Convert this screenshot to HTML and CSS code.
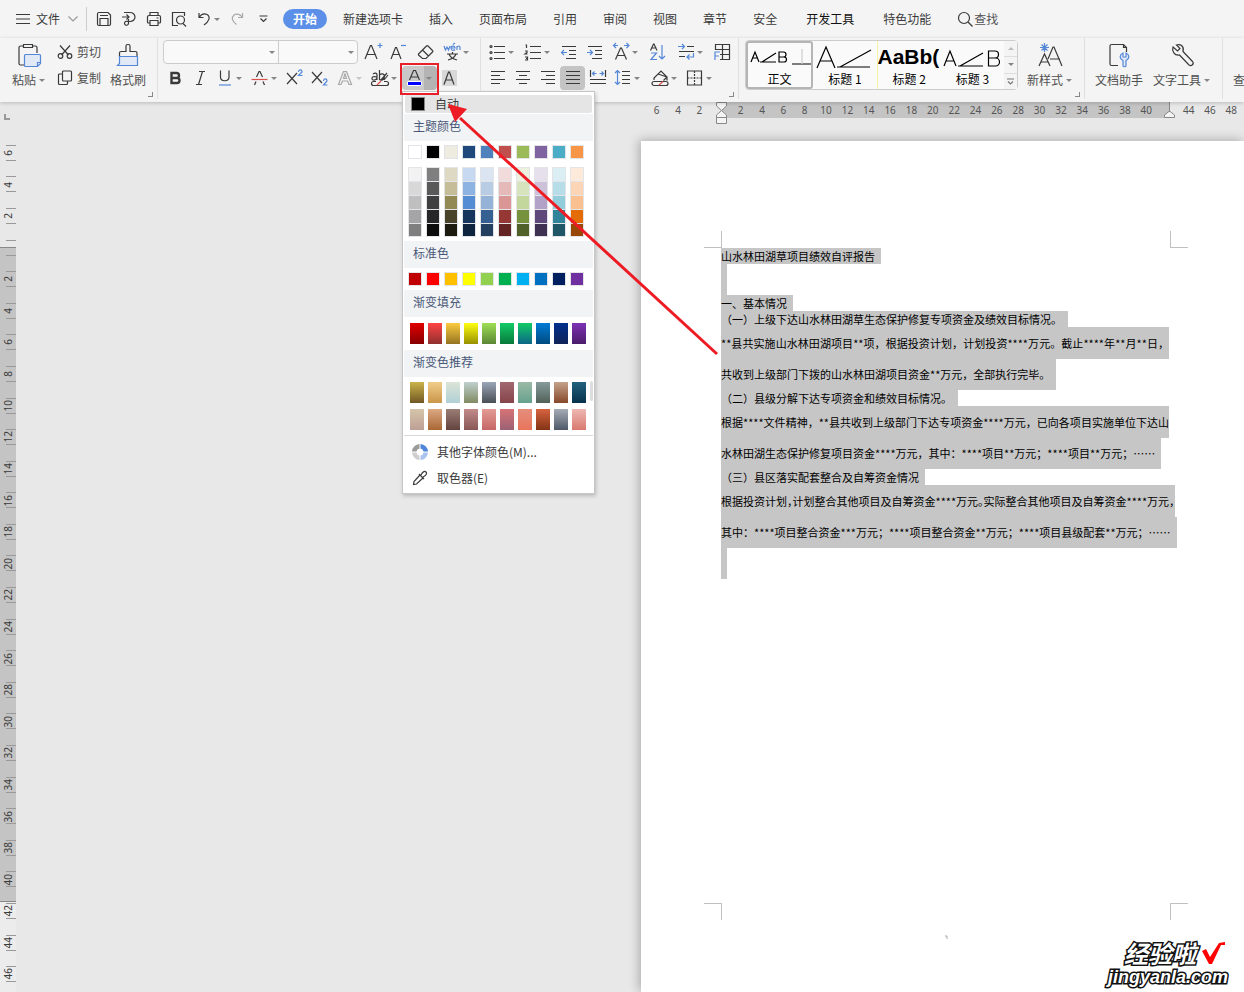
FILE: index.html
```html
<!DOCTYPE html>
<html lang="zh-CN">
<head>
<meta charset="utf-8">
<title>文字处理</title>
<link rel="stylesheet" href="styles.css">
</head>
<body>
<header class="menubar">
  <button class="file"><svg width="14" height="14" viewBox="0 0 14 14"><path d="M0 2.500h14M0 7h14M0 11.500h14"/></svg><span>文件</span><svg class="dim" width="10" height="8" viewBox="0 0 10 8"><path d="M.5 1.500 5 6l4.500-4.500"/></svg></button>
  <div class="quick">
    <button aria-label="保存"><svg width="16" height="16" viewBox="0 0 16 16"><path d="M1.500 3a1.500 1.500 0 0 1 1.500-1.500h9l2.500 2.500v9a1.500 1.500 0 0 1-1.500 1.500H3A1.500 1.500 0 0 1 1.500 13zM4 4.500h8M4 14V7.500h8V14"/></svg></button>
    <button aria-label="输出"><svg width="16" height="16" viewBox="0 0 16 16"><path d="M3 1.500h6a5 4.500 0 0 1 0 9H7.500M1 6h7M5.500 3.500 8 6l-2.500 2.500M7.500 8v4.500a2 2 0 1 1-3-2c1-.6 2 0 3 0"/></svg></button>
    <button aria-label="打印"><svg width="16" height="16" viewBox="0 0 16 16"><path d="M4 4.500v-3h8v3M4 12H2.500A1 1 0 0 1 1.500 11V6a1.500 1.500 0 0 1 1.500-1.500h10A1.500 1.500 0 0 1 14.500 6v5a1 1 0 0 1-1 1H12M4 9.500h8v5H4zM10.500 7h2"/></svg></button>
    <button aria-label="打印预览"><svg width="16" height="16" viewBox="0 0 16 16"><path d="M7 14.500H1.500v-13h12V5M12 12.500l3 3"/><circle cx="9.500" cy="9" r="4"/></svg></button>
    <button class="undo" aria-label="撤销"><svg width="16" height="16" viewBox="0 0 16 16"><path d="M3 2v4.500h4.500M3 6.500C5 3.500 8 2 11 3.500c4 2.500 2 7-3 10.500"/></svg><i class="caret"></i></button>
    <button class="faded" aria-label="恢复"><svg width="16" height="16" viewBox="0 0 16 16"><path d="M13.500 2v4.500H9M13.500 6.500C11.500 3.500 8 2 5 4c-3 2.500-2 6 2.500 9.500"/></svg></button>
    <button class="more" aria-label="更多"><svg width="9" height="8" viewBox="0 0 9 8"><path d="M.5 1h8M1.500 3.500l3 3 3-3"/></svg></button>
  </div>
  <nav class="tabs">
    <button class="active">开始</button><button>新建选项卡</button><button>插入</button><button>页面布局</button><button>引用</button><button>审阅</button><button>视图</button><button>章节</button><button>安全</button><button class="strong">开发工具</button><button>特色功能</button>
  </nav>
  <button class="search"><svg width="17" height="17" viewBox="0 0 17 17"><circle cx="7" cy="7" r="5.500"/><path d="m11 11 4.500 4.500"/></svg><span>查找</span></button>
</header>

<div class="ribbon">
  <section class="group clipboard">
    <button class="big"><svg width="26" height="26" viewBox="0 0 26 26"><path d="M7 4H4.500A1.500 1.500 0 0 0 3 5.500v16A1.500 1.500 0 0 0 4.500 23H8M17 4h2.500A1.500 1.500 0 0 1 21 5.500V11M7.500 2.500h9v3h-9z"/><path class="bluefill" d="M8.500 13.500a1 1 0 0 1 1-1h14a1 1 0 0 1 1 1v8l-3 3h-12a1 1 0 0 1-1-1zM24.500 20.500h-3v4"/></svg><span>粘贴<i class="caret"></i></span></button>
    <div class="stack">
      <button><svg width="16" height="16" viewBox="0 0 16 16"><path d="M3 1.500 11.500 11M13 1.500 4.500 11"/><circle cx="3.500" cy="12" r="2.300"/><circle cx="12.500" cy="12" r="2.300"/></svg><span>剪切</span></button>
      <button><svg width="16" height="16" viewBox="0 0 16 16"><path d="M5.500 2a1 1 0 0 1 1-1h7a1 1 0 0 1 1 1v8a1 1 0 0 1-1 1h-7a1 1 0 0 1-1-1zM5.500 4H2.500a1 1 0 0 0-1 1v8.500a1 1 0 0 0 1 1h7a1 1 0 0 0 1-1V11"/></svg><span>复制</span></button>
    </div>
    <button class="big"><svg width="26" height="26" viewBox="0 0 26 26"><path d="M4.500 14.500V11a1.500 1.500 0 0 1 1.500-1.500h5V4a1.500 1.500 0 0 1 1.500-1.500h1A1.500 1.500 0 0 1 15 4v5.500h5.500A1.500 1.500 0 0 1 22 11v3.500"/><path class="bluefill" d="M4.500 14.500H22.500v9H2.500l2-2z"/></svg><span>格式刷</span></button>
    <i class="launcher"></i>
  </section>

  <section class="group font">
    <div class="row">
      <div class="combo"><label><input aria-label="字体"><i class="caret"></i></label><label><input aria-label="字号"><i class="caret"></i></label></div>
      <button class="tool" aria-label="增大字号"><svg width="20" height="20" viewBox="0 0 20 20"><path d="M2 17 7.500 3.500h1L14 17M4 12.500h8"/><path class="blue" d="M14.500 3.500h5M17 1v5"/></svg></button>
      <button class="tool" aria-label="减小字号"><svg width="20" height="20" viewBox="0 0 20 20"><path d="M3 17 7.500 5.500h1L13 17M4.500 12.500h7"/><path class="blue" d="M13 3.500h5"/></svg></button>
      <button class="tool wide" aria-label="清除格式"><svg width="20" height="20" viewBox="0 0 20 20"><path d="M3.500 12 11.500 4a1 1 0 0 1 1.500 0l4.500 4.500a1 1 0 0 1 0 1.500L11 16.500H7.500L3.500 13a1 1 0 0 1 0-1zM7.500 8l6 6"/></svg></button>
      <button class="tool drop wide" aria-label="拼音指南"><svg width="20" height="20" viewBox="0 0 20 20"><path class="blue" d="M2 4l1.500 4L5 5l1.500 3L8 4M9 6h4c0-2.500-4-2.500-4 0 0 3 3 2.500 4 1.500M11 2.500l2-1.500M15 8V4M15 5.500c1-2 3-2 3 0V8"/><path d="M5 12h11M10.500 10v2M7 12c1 3 4 5 8 6M14 12c-1 3-4 5-8 6"/></svg><i class="caret"></i></button>
    </div>
    <div class="row second">
      <button class="tool" aria-label="加粗"><svg width="20" height="20" viewBox="0 0 20 20"><path class="heavy" d="M6.500 5h5a2.300 2.300 0 0 1 0 5h-5zM6.500 10H12a2.500 2.500 0 0 1 0 5H6.500z"/></svg></button>
      <button class="tool" aria-label="倾斜"><svg width="20" height="20" viewBox="0 0 20 20"><path d="M9 3.500h6M6 16.500h6M12.500 3.500l-4 13"/></svg></button>
      <button class="tool drop" aria-label="下划线"><svg width="20" height="20" viewBox="0 0 20 20"><path d="M5.500 2.500V9c0 5 8.500 5 8.500 0V2.500"/><path class="blue" d="M4 17h12"/></svg><i class="caret"></i></button>
      <button class="tool drop" aria-label="删除线"><svg width="20" height="20" viewBox="0 0 20 20"><path d="M4.500 17 6 13.500M14.500 17 13 13.500M6.500 9 9 3.500h1L12.500 9"/><path class="red" d="M1.500 11.500h16"/></svg><i class="caret"></i></button>
      <button class="tool" aria-label="上标"><svg width="20" height="20" viewBox="0 0 20 20"><path d="m2 5 10 11M12 5 2 16"/><path class="blue" d="M13.500 4c0-3 4-2.500 3.500 0L13.500 7.500h4"/></svg></button>
      <button class="tool" aria-label="下标"><svg width="20" height="20" viewBox="0 0 20 20"><path d="m2 4 10 11M12 4 2 15"/><path class="blue" d="M13.500 13c0-3 4-2.500 3.500 0l-3.500 4h4"/></svg></button>
      <button class="tool drop faded" aria-label="文字效果"><svg width="20" height="20" viewBox="0 0 20 20"><path d="M3.500 16.500 8.500 3.500h3l5 13H14L12.500 13h-5L6 16.500zM8.500 10.500h3L10 6z"/></svg><i class="caret"></i></button>
      <button class="tool drop" aria-label="突出显示"><svg width="20" height="20" viewBox="0 0 20 20"><path d="M3 6c2-1.500 4-1 4 1v5M7 9c-4-1-5 0-5 1.500C2 13 6 12.500 7 10M9.500 2v10M9.500 7c2-2 5-1.500 5 1.500s-3 4.500-5 3M17 5l-6 7M18 7l-4 5M6 13.500H3.500a2 2 0 0 0 0 4h13a2 2 0 0 0 0-4H14"/><path class="red" d="m7 17 4-4"/></svg><i class="caret"></i></button>
      <div class="colorpick">
        <button class="tool drop pressed" aria-label="字体颜色" aria-expanded="true"><svg width="20" height="20" viewBox="0 0 20 20"><path d="m4.500 12 4-9.500h2l4 9.500M6 9h7"/><rect class="plate" x="2" y="13" width="15" height="5" rx="2"/><path class="inkline" d="M3 15.500h13"/></svg><i class="caret"></i></button>
        <div class="menu">
          <button class="auto"><i class="black"></i>自动</button>
          <h3>主题颜色</h3>
          <div class="swatches" id="theme"></div>
          <div class="swatches shades" id="shades"></div>
          <h3>标准色</h3>
          <div class="swatches" id="standard"></div>
          <h3>渐变填充</h3>
          <div class="swatches fades" id="fills"></div>
          <h3>渐变色推荐</h3>
          <div class="swatches fades suggested" id="suggested"></div>
          <button class="entry"><svg width="16" height="16" viewBox="0 0 16 16"><path fill="#4f86d9" stroke="none" d="M8.500 0A8 8 0 0 1 16 7.500h-4.500A3.500 3.500 0 0 0 8.500 4.500z"/><path fill="#a9c4ee" stroke="none" d="M16 8.500A8 8 0 0 1 8.500 16v-4.500a3.500 3.500 0 0 0 3-3z"/><path fill="#cfcfcf" stroke="none" d="M7.500 16A8 8 0 0 1 0 8.500h4.500a3.500 3.500 0 0 0 3 3z"/><path fill="#9b9b9b" stroke="none" d="M0 7.500A8 8 0 0 1 7.500 0v4.500a3.500 3.500 0 0 0-3 3z"/></svg>其他字体颜色(M)...</button>
          <button class="entry"><svg width="16" height="16" viewBox="0 0 16 16"><path d="m8 5-6 6.500-.5 3 3-.5L11 8M7 4l5 5M9 5c2-4 4-4 5-3s1 3-3 5"/></svg>取色器(E)</button>
        </div>
        <i class="frame"></i>
      </div>
      <button class="tool" aria-label="字符底纹"><svg width="20" height="20" viewBox="0 0 20 20"><rect class="shade" x="2" y="2" width="15" height="16"/><path d="M4 16.500 8.500 4h1l4.500 12.500M5.500 12h7"/></svg></button>
    </div>
  </section>

  <section class="group para">
    <div class="row">
      <button class="tool drop" aria-label="项目符号"><svg width="20" height="20" viewBox="0 0 20 20"><path d="M7 4.500h11M7 10.500h11M7 16.500h11"/><circle cx="4" cy="4.500" r="1"/><circle cx="4" cy="10.500" r="1"/><circle cx="4" cy="16.500" r="1"/></svg><i class="caret"></i></button>
      <button class="tool drop" aria-label="编号"><svg width="20" height="20" viewBox="0 0 20 20"><path d="M7 4.500h11M7 10.500h11M7 16.500h11M2.500 3h1v3M2 9h2v1.500L2 12h2.500M2 15h2.500v3H2M3 16.500h1"/></svg><i class="caret"></i></button>
      <button class="tool" aria-label="减少缩进"><svg width="20" height="20" viewBox="0 0 20 20"><path d="M3 4.500h14M10 8.500h7M10 12.500h7M7 16.500h10"/><path class="blue" d="M8 10.500H2.500M5 8l-2.500 2.500L5 13"/></svg></button>
      <button class="tool" aria-label="增加缩进"><svg width="20" height="20" viewBox="0 0 20 20"><path d="M3 4.500h14M10 8.500h7M10 12.500h7M7 16.500h10"/><path class="blue" d="M2 10.500h5.500M5 8l2.500 2.500L5 13"/></svg></button>
      <button class="tool drop" aria-label="字符缩放"><svg width="20" height="20" viewBox="0 0 20 20"><path d="M4.500 17.500 9.500 6h1l5 11.500M6.500 13.500h7"/><path class="blue" d="M7 3.500H2.500M5 1 2.500 3.500 5 6M13 3.500h5M15.500 1 18 3.500 15.500 6"/></svg><i class="caret"></i></button>
      <button class="tool" aria-label="排序"><svg width="20" height="20" viewBox="0 0 20 20"><path d="M3.500 8.500 6.500 2h.5l3 6.500M4.500 6h5"/><path class="blue" d="M4 11h5.500L4 17.500h6M15 3v14M12 14l3 3 3-3"/></svg></button>
      <button class="tool drop gap" aria-label="显示标记"><svg width="20" height="20" viewBox="0 0 20 20"><path d="M11 4.500h7M3 9.500h15M3 14.500h6"/><path class="blue" d="M2 4.500h6M6 2l2.500 2.500L6 7M17.500 11v4H11M13.500 12.500 11 15l2.500 2.500"/></svg><i class="caret"></i></button>
      <button class="tool" aria-label="制表位"><svg width="20" height="20" viewBox="0 0 20 20"><path d="M3.500 8V2.500h14v15H8M10.500 2.500v15M3.500 7.500h14M8 12.500h9.500"/><path class="blue" d="M3 18v-8h5M3 14h4"/></svg></button>
    </div>
    <div class="row second">
      <button class="tool" aria-label="左对齐"><svg width="20" height="20" viewBox="0 0 20 20"><path d="M3 3.500h14M3 7.500h9M3 11.500h14M3 15.500h9"/></svg></button>
      <button class="tool" aria-label="居中"><svg width="20" height="20" viewBox="0 0 20 20"><path d="M3 3.500h14M6 7.500h8M3 11.500h14M6 15.500h8"/></svg></button>
      <button class="tool" aria-label="右对齐"><svg width="20" height="20" viewBox="0 0 20 20"><path d="M3 3.500h14M8 7.500h9M3 11.500h14M8 15.500h9"/></svg></button>
      <button class="tool pressed" aria-label="两端对齐"><svg width="20" height="20" viewBox="0 0 20 20"><path d="M3 3.500h14M3 7.500h14M3 11.500h14M3 15.500h14"/></svg></button>
      <button class="tool" aria-label="分散对齐"><svg width="20" height="20" viewBox="0 0 20 20"><path d="M2.500 2v7M17.500 2v7M2 11.500h16M2 15.500h16"/><path class="blue" d="M4.500 5.500h4M6.500 3.500l-2 2 2 2M15.500 5.500h-4M13.500 3.500l2 2-2 2"/></svg></button>
      <button class="tool drop" aria-label="行距"><svg width="20" height="20" viewBox="0 0 20 20"><path d="M9 3.500h8M9 7.500h8M9 11.500h8M9 15.500h8"/><path class="blue" d="M4.500 2.500v14M2 5l2.500-2.500L7 5M2 14l2.500 2.500L7 14"/></svg><i class="caret"></i></button>
      <button class="tool drop second-gap" aria-label="底纹颜色"><svg width="20" height="20" viewBox="0 0 20 20"><path d="M4 12v-2l7-7 6 6-3.500 3.500M8 6l9 3M17 9v3.500M4 13.500h12a2 2 0 0 1 0 4H4a2 2 0 0 1 0-4z"/><path class="red" d="m9 17 4-3.500"/></svg><i class="caret"></i></button>
      <button class="tool drop" aria-label="边框"><svg width="20" height="20" viewBox="0 0 20 20"><path d="M2.500 3h14v14h-14z"/><path stroke-dasharray="2 1" d="M9.500 3v14M2.500 10h14"/></svg><i class="caret"></i></button>
    </div>
    <i class="launcher"></i>
  </section>

  <section class="group styles">
    <div class="gallery">
      <button class="style chosen"><svg width="60" height="26" viewBox="0 0 60 26"><path d="m1 19 4-10 4 10M2 15h6M10 19h16M12 19 26 10M29 9h4.500a2 2 0 0 1 0 5H29zM29 14h5a2 2 0 0 1 0 5h-5zM42 21h20"/><path class="dim" d="M52 6v15"/></svg>正文</button>
      <button class="style"><svg width="58" height="28" viewBox="0 0 58 28"><path d="m1 27 9-21 9 21M4 20h12M21 26h33M24 26 55 9"/></svg>标题 1</button>
      <button class="style edge"><b>AaBb(</b>标题 2</button>
      <button class="style"><svg width="58" height="28" viewBox="0 0 58 28"><path d="m1 25 6-15 6 15M3 20h8M15 25h25M17 25 40 12M45.500 10h6.500a3 3 0 0 1 0 7h-6.500zM45.500 17h7a3 3 0 0 1 0 8h-7z"/></svg>标题 3</button>
      <div class="scroller"><button class="off" aria-label="上"><i class="caret up"></i></button><button aria-label="下"><i class="caret"></i></button><button aria-label="展开"><svg width="7" height="7" viewBox="0 0 7 7"><path d="M0 1h7M1 3.500 3.500 6 6 3.500"/></svg></button></div>
    </div>
    <button class="big newstyle"><svg width="26" height="26" viewBox="0 0 26 26"><path d="m2 24 5.500-12 5.500 12M4 20h7M11 17l5-12h1L25 24M13 17h10"/><path class="blue" d="M7.500 1v9M3 5.500h9M4.500 2.500l6 6M10.500 2.500l-6 6"/></svg><span>新样式<i class="caret"></i></span></button>
    <i class="launcher"></i>
  </section>

  <section class="group tools">
    <button class="big"><svg width="26" height="26" viewBox="0 0 26 26"><path d="M12 23.500H5.500a1.500 1.500 0 0 1-1.500-1.500V4A1.500 1.500 0 0 1 5.500 2.500h12L20.500 5.500V10M17.500 2.500v3h3"/><path class="bluefill" d="M17 24v-5.500c-4-2-3.500-6 0-7.500V15h3v-4c3.500 1.500 4 5.500 0 7.500V24c-.5 1-2.500 1-3 0z"/></svg><span>文档助手</span></button>
    <button class="big"><svg width="26" height="26" viewBox="0 0 26 26"><path d="M4 5 8.500 9 11 6.500 7.500 3c4-1.500 8 1.500 6.500 6.500L23.500 19.500c2 2.500-1 5-3.500 3.500L10.500 13C5.500 14 2.500 9 4 5z"/></svg><span>文字工具<i class="caret"></i></span></button>
  </section>
  <section class="group find"><button class="big"><svg width="26" height="26" viewBox="0 0 26 26"></svg><span>查找替换</span></button></section>
</div>

<main class="workspace">
  <div class="vruler"><i class="corner"></i><div class="vcells" id="vruler"></div></div>
  <div class="canvas">
    <div class="hruler">
      <div class="outer" id="before"></div>
      <div class="inner"><svg class="indent" width="11" height="24" viewBox="0 0 11 24"><path d="M.5.5h10V4l-5 4.500-5-4.500zM.5 15.500V13l5-4.500 5 4.500v2.500zM.5 15.500h10v6H.5z"/></svg><div class="nums" id="inside"></div><svg class="indent" width="11" height="24" viewBox="0 0 11 24"><path d="M5.500 0v10M.5 15.500V13l5-4 5 4v2.500z"/></svg></div>
      <div class="outer after" id="after"></div>
    </div>
    <article class="page">
      <div class="marks"><i class="tl"></i><i class="tr"></i></div>
      <div class="text">
        <p><mark>山水林田湖草项目绩效自评报告</mark></p>
        <p class="blank"><mark></mark></p>
        <p><mark>一、基本情况</mark></p>
        <p><mark>（一）上级下达山水林田湖草生态保护修复专项资金及绩效目标情况。</mark></p>
        <p class="tall full"><mark>**县共实施山水林田湖项目**项，根据投资计划，计划投资****万元。截止****年**月**日，</mark></p>
        <p class="tall last"><mark>共收到上级部门下拨的山水林田湖项目资金**万元，全部执行完毕。</mark></p>
        <p><mark>（二）县级分解下达专项资金和绩效目标情况。</mark></p>
        <p class="tall full"><mark>根据****文件精神，**县共收到上级部门下达专项资金****万元，已向各项目实施单位下达山</mark></p>
        <p class="tall last"><mark>水林田湖生态保护修复项目资金****万元，其中：****项目**万元；****项目**万元；……</mark></p>
        <p><mark>（三）县区落实配套整合及自筹资金情况</mark></p>
        <p class="tall full tight"><mark>根据投资计划，计划整合其他项目及自筹资金****万元。实际整合其他项目及自筹资金****万元，</mark></p>
        <p class="tall last"><mark>其中：****项目整合资金***万元；****项目整合资金**万元；****项目县级配套**万元；……</mark></p>
        <p class="blank"><mark></mark></p>
      </div>
      <div class="marks"><i class="bl"></i><i class="br"></i></div>
      <svg class="speck" width="4" height="5" viewBox="0 0 4 5"><path d="M0 1h2v3"/></svg>
    </article>
  </div>
</main>

<svg class="pointer" width="290" height="270" viewBox="0 0 290 270"><path class="shaft" d="M277 254 20 18"/><path class="head" d="M8 4 27 9 15 22z"/></svg>
<div class="watermark"><div class="brand">经验啦<svg width="24" height="24" viewBox="0 0 24 24"><path d="m0 10 4-2 4 8L17 2l6-1v3h-4l-9 19H7z"/></svg></div><div class="site">jingyanla.com</div></div>
<script src="script.js"></script>
</body>
</html>
```
FILE: styles.css
```css
* { box-sizing: border-box; margin: 0; padding: 0; }
body { height: 100vh; overflow: hidden; display: flex; flex-direction: column; position: relative; background: #e8e8e8; color: #3a3a3a; font: 12px/16px "Noto Sans CJK SC", sans-serif; }
button { border: 0; background: none; color: inherit; font: inherit; white-space: nowrap; }
svg { display: block; flex: none; overflow: visible; fill: none; stroke: #3a3a3a; stroke-width: 1.2; }
.blue { stroke: #5487d8; }
.bluefill { stroke: #5487d8; fill: #e1e9f6; }
.red { stroke: #d9534f; }
.dim { stroke: #999; }
.caret { display: inline-block; flex: none; border: solid transparent; border-width: 3px 3px 0; border-top-color: #858585; }
.caret.up { border-width: 0 3px 3px; border-bottom-color: #bbb; }
.faded { opacity: .4; }

.menubar { flex: none; height: 38px; display: flex; align-items: center; padding-left: 16px; background: #f4f4f4; }
.file { display: flex; align-items: center; gap: 6px; padding-right: 8px; height: 24px; border-right: 1px solid #ccc; }
.file .dim { margin-left: 2px; }
.quick { display: flex; align-items: center; gap: 9px; padding-left: 9px; }
.quick button { display: flex; align-items: center; }
.undo { gap: 2px; }
.quick .more { padding-left: 5px; }
.tabs { display: flex; align-items: center; gap: 26px; margin-left: 15px; }
.tabs .active { width: 44px; height: 20px; margin-right: -10px; border-radius: 10px; background: #5b8fe8; color: #fff; font-weight: 700; }
.tabs .strong { margin: 0 3px; color: #111; }
.search { display: flex; align-items: center; margin-left: 26px; color: #555; }

.ribbon { flex: none; height: 64px; display: flex; position: relative; z-index: 2; background: #f4f4f4; box-shadow: 0 1px 4px #0003; }
.group { position: relative; flex: none; padding-top: 1px; }
.group::after { content: ""; position: absolute; right: 0; top: 0; height: 61px; border-right: 1px solid #e0e0e0; }
.launcher { position: absolute; right: 5px; bottom: 5px; width: 5px; height: 5px; border: solid #888; border-width: 0 1px 1px 0; }
.big { display: flex; flex-direction: column; align-items: center; gap: 4px; height: 50px; padding-top: 3px; color: #505050; }
.big span { display: flex; align-items: center; gap: 3px; }
.clipboard { display: flex; width: 158px; padding-left: 12px; }
.stack { display: flex; flex-direction: column; margin: 0 9px 0 12px; }
.stack button { display: flex; align-items: center; gap: 4px; height: 26px; color: #505050; }
.font { width: 323px; padding-left: 4px; }
.row { display: flex; align-items: center; height: 26px; }
.combo { display: flex; width: 195px; height: 24px; margin: 0 2px 0 1px; border: 1px solid #ccc; border-radius: 4px; background: #f9f9f9; }
.combo label { display: flex; align-items: center; flex: 1; padding-right: 3px; min-width: 0; }
.combo label:first-child { flex: 0 0 115px; border-right: 1px solid #ccc; }
.combo input { flex: 1; min-width: 0; height: 100%; border: 0; outline: 0; background: none; }
.tool { flex: none; display: flex; align-items: center; justify-content: center; width: 25px; height: 24px; border-radius: 4px; }
.drop { width: 35px; padding-left: 3px; justify-content: flex-start; gap: 1px; }
.wide { margin-left: 2px; }
.heavy { stroke-width: 2.400; }
.pressed { background: #c4c4c4; }
.colorpick { position: relative; }
.colorpick .pressed { background: linear-gradient(90deg, #c9c9c9 22px, #b4b4b4 22px); }
.plate { fill: #fff; stroke: none; }
.inkline { stroke: #00f; stroke-width: 3; }
.shade { fill: #d8d8d8; stroke: none; }
.frame { position: absolute; left: -2px; top: -3px; width: 39px; height: 32px; border: 2px solid #e8202a; pointer-events: none; z-index: 4; }
.para { width: 258px; padding-left: 3px; }
.para .row:first-child { gap: 1px; }
.para .second { padding-left: 1px; }
.gap { margin-left: 3px; }
.second-gap { margin-left: 2px; }
.styles { display: flex; width: 346px; padding-left: 6px; }
.gallery { display: flex; width: 273px; height: 50px; margin-top: 1px; border: 1px solid #ccc; border-radius: 4px; background: #fafafa; }
.style { flex: 1; min-width: 0; display: flex; flex-direction: column; align-items: center; justify-content: space-between; overflow: hidden; padding-bottom: 2px; color: #000; }
.style svg { stroke: #000; }
.style .dim { stroke: #ccc; }
.style b { align-self: stretch; overflow: hidden; margin-right: 2px; font: 700 21px/32px "Liberation Sans", sans-serif; height: 30px; text-align: left; }
.edge { border-left: 1px solid #f6f3a0; }
.chosen { border: 2px solid #b5b5b5; border-radius: 3px; padding-bottom: 0; }
.scroller { flex: none; width: 13px; display: flex; flex-direction: column; background: #f4f4f4; }
.scroller button { flex: 1; display: flex; align-items: center; justify-content: center; border-top: 1px solid #ddd; }
.scroller .off { border: 0; }
.scroller svg { stroke: #777; }
.newstyle { margin-left: 9px; }
.tools { display: flex; gap: 10px; width: 138px; padding-left: 10px; }
.find { padding-left: 10px; }

.menu { position: absolute; left: 0; top: 25px; width: 193px; padding: 3px 1px 2px; background: #fff; border: 1px solid #c6c6c6; box-shadow: 1px 2px 4px #0003; z-index: 3; }
.auto { display: flex; align-items: center; gap: 10px; width: 187px; height: 18px; margin-left: 1px; padding-left: 6px; background: #e5e5e5; border-radius: 2px; }
.black { width: 14px; height: 14px; background: #000; border: 1px solid #888; }
.menu h3 { height: 27px; padding-left: 9px; background: #f1f3f5; color: #4a5878; font: 12px/24px "Noto Sans CJK SC", sans-serif; }
.auto + h3 { margin-top: 1px; }
.swatches { display: grid; grid-template-columns: repeat(10, 14px); column-gap: 4px; padding: 4px; }
.swatch { height: 14px; border: 1px solid #e2e4e7; }
.shades .swatch { border-width: 1px 1px 0; }
.shades .swatch:nth-last-child(-n+10) { border-bottom-width: 1px; }
.fades { padding: 6px; row-gap: 6px; }
.fades .swatch { height: 21px; border: 0; }
.suggested { position: relative; padding: 5px 6px; border-bottom: 1px solid #d9d9d9; margin-bottom: 3px; }
.suggested::after { content: ""; position: absolute; right: 0; top: 4px; width: 3px; height: 20px; background: #ddd; border-radius: 2px; }
.entry { display: flex; align-items: center; gap: 9px; width: 100%; height: 26px; padding-left: 8px; }

.workspace { flex: 1; min-height: 0; display: flex; }
.vruler { flex: none; width: 16px; display: flex; flex-direction: column; padding: 12px 0 2px; background: linear-gradient(#e8e8e8 145px, #888 145px, #888 146px, #c4c4c4 146px, #c4c4c4 799px, #888 799px, #888 800px, #ececec 800px); font: 10px/10px "Noto Sans", sans-serif; }
.corner { width: 6px; height: 6px; margin: 0 0 17px 4px; border: solid #999; border-width: 0 0 2px 2px; }
.vcells { flex: 1; display: grid; grid-auto-rows: 1fr; align-items: center; }
.vcells span { display: flex; align-items: center; justify-content: center; width: 10px; height: 16px; margin-left: 6px; border: solid #999; border-width: 1px 0; }
.vcells b { margin-right: 6px; font-weight: 400; writing-mode: vertical-rl; transform: rotate(180deg); }
.canvas { flex: 1; min-width: 0; display: flex; flex-direction: column; padding-left: 625px; }
.hruler { flex: none; height: 16px; display: flex; color: #555; font: 10px/16px "Noto Sans", sans-serif; text-align: center; }
.outer, .nums { display: grid; grid-auto-flow: column; grid-auto-columns: 1fr; }
.outer { flex: none; width: 80px; padding: 0 11px 0 5px; }
.inner { flex: none; width: 449px; display: flex; justify-content: space-between; background: #c4c4c4; }
.nums { width: 427px; margin-left: -4px; }
.indent { margin: 0 -5px; stroke: #888; fill: #f4f4f4; stroke-width: 1; }
.after { padding: 0 8px; }
.page { flex: 1; min-height: 0; margin-top: 23px; padding: 90px 0 0 63px; background: #fff; box-shadow: -2px -1px 10px #0004; }
.marks { display: flex; justify-content: space-between; width: 484px; }
.marks i { width: 18px; height: 17px; border: 0 solid #c0c0c0; }
.marks .tl { border-width: 0 1px 1px 0; }
.marks .tr { border-width: 0 0 1px 1px; }
.marks .bl { border-width: 1px 1px 0 0; }
.marks .br { border-width: 1px 0 0 1px; }
.text { width: 448px; min-height: 655px; margin-left: 17px; color: #000; font: 11px/16px "Noto Sans CJK SC", sans-serif; }
.text p { display: flex; height: 16px; white-space: nowrap; }
.text mark { background: #c6c6c6; color: inherit; padding-right: 6px; }
.text .blank { height: 31px; }
.text .tall { height: 32px; line-height: 32px; }
.text .last { height: 31px; line-height: 31px; }
.full mark { flex: none; min-width: 100%; padding: 0; text-align: justify; text-align-last: justify; white-space: nowrap; }
.tight { font-feature-settings: "halt"; }
.speck { margin: 15px 0 0 241px; stroke: #aaa; stroke-width: 1; }

.pointer { position: absolute; left: 440px; top: 100px; z-index: 5; pointer-events: none; }
.shaft { stroke: #ed1c24; stroke-width: 3; }
.head { fill: #ed1c24; stroke: none; }
.watermark { position: absolute; right: 16px; bottom: 4px; z-index: 5; color: #fff; font-weight: 700; -webkit-text-stroke: 3px #111; paint-order: stroke fill; }
.brand { display: flex; align-items: center; gap: 6px; padding-left: 16px; font-size: 24px; line-height: 26px; font-style: italic; }
.brand svg { fill: #f00; stroke: none; }
.site { font: italic 700 18px/22px "Liberation Sans", sans-serif; }
```
FILE: script.js
```js
function fill(id, items, draw) {
  const box = document.getElementById(id);
  for (const item of items) box.append(draw(item));
}

function swatch(color) {
  const b = document.createElement('button');
  b.className = 'swatch';
  b.setAttribute('aria-label', color);
  b.style.background = color.includes(' ') ? `linear-gradient(${color.split(' ').join(', ')})` : color;
  return b;
}

function number(n) {
  const s = document.createElement('span');
  s.textContent = n;
  return s;
}

function verticalCell(n) {
  const s = document.createElement('span');
  if (n) {
    const b = document.createElement('b');
    b.textContent = Math.abs(n);
    s.append(b);
  }
  return s;
}

const evens = (from, to) => Array.from({ length: (to - from) / 2 + 1 }, (_, i) => from + i * 2);

fill('theme', '#fff #000 #eeece1 #1f497d #4f81bd #c0504d #9bbb59 #8064a2 #4bacc6 #f79646'.split(' '), swatch);
fill('shades', [
  '#f2f2f2 #7f7f7f #ddd9c3 #c6d9f0 #dbe5f1 #f2dcdb #ebf1dd #e5e0ec #dbeef3 #fdeada',
  '#d8d8d8 #595959 #c4bd97 #8db3e2 #b8cce4 #e5b9b7 #d7e3bc #ccc1d9 #b7dde8 #fbd5b5',
  '#bfbfbf #3f3f3f #938953 #548dd4 #95b3d7 #d99694 #c3d69b #b2a2c7 #92cddc #fac08f',
  '#a5a5a5 #262626 #494429 #17365d #366092 #953734 #76923c #5f497a #31859b #e36c09',
  '#7f7f7f #0c0c0c #1d1b10 #0f243e #244061 #632423 #4f6128 #3f3151 #205867 #974806'
].join(' ').split(' '), swatch);
fill('standard', '#c00000 #f00 #ffc000 #ff0 #92d050 #00b050 #00b0f0 #0070c0 #002060 #7030a0'.split(' '), swatch);
fill('fills', ['#e00000 #870000', '#ff4343 #903030', '#fbca3e #947422', '#ffff10 #989000', '#9edf55 #5b8634', '#12cb66 #08783b', '#12cb66 #0b6687', '#007bd5 #004b80', '#002f8d #102458', '#7d32b4 #4b1d6b'], swatch);
fill('suggested', ['#cbb34c #715722', '#f0cc89 #ca964a', '#dbe4d6 #b1d0d6', '#bfd0cf #818a61', '#9ba7b8 #494f54', '#a26971 #854449', '#9abaa5 #66a28e', '#859c9b #526158', '#c4a38a #87482a', '#23627f #06314a',
  '#d5c5aa #bd9f95', '#dca883 #a96734', '#9a7d75 #64433f', '#c28b8a #875756', '#e49c95 #c56767', '#d77376 #9b6275', '#e48e7c #e9745b', '#d76340 #823314', '#a5acb7 #4e5867', '#edb8b3 #d9796e'], swatch);

fill('before', [6, 4, 2], number);
fill('inside', evens(2, 40), number);
fill('after', evens(44, 48), number);
fill('vruler', evens(-6, 46), verticalCell);
```
